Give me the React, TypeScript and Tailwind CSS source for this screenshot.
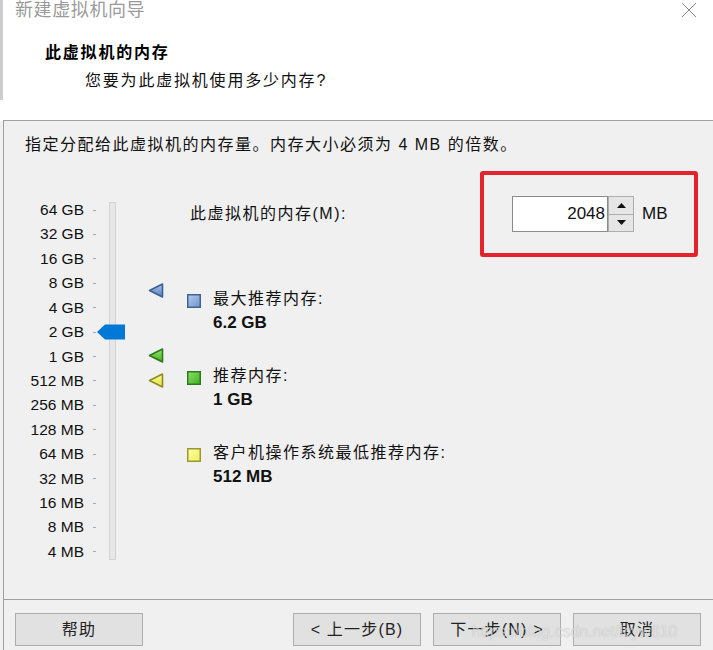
import React from "react";

const CJK = '"Liberation Sans", "Noto Sans CJK SC", sans-serif';
const LAT = '"Liberation Sans", sans-serif';

const labels = [
  "64 GB", "32 GB", "16 GB", "8 GB", "4 GB", "2 GB", "1 GB", "512 MB",
  "256 MB", "128 MB", "64 MB", "32 MB", "16 MB", "8 MB", "4 MB",
];

function Tri({ fill1, fill2, stroke }: { fill1: string; fill2: string; stroke: string }) {
  const id = "g" + fill1.replace("#", "");
  return (
    <svg width="16" height="15" viewBox="0 0 16 15">
      <defs>
        <linearGradient id={id} x1="0" y1="0" x2="0" y2="1">
          <stop offset="0" stopColor={fill1} />
          <stop offset="1" stopColor={fill2} />
        </linearGradient>
      </defs>
      <polygon points="1.5,7.5 14.5,1 14.5,14" fill={`url(#${id})`} stroke={stroke} strokeWidth="1.6" strokeLinejoin="round" />
    </svg>
  );
}

function Sq({ fill1, fill2, border }: { fill1: string; fill2: string; border: string }) {
  return (
    <svg width="14" height="14" viewBox="0 0 14 14" className="shrink-0">
      <defs>
        <linearGradient id={"s" + fill1.replace("#", "")} x1="0" y1="0" x2="1" y2="1">
          <stop offset="0" stopColor={fill1} />
          <stop offset="1" stopColor={fill2} />
        </linearGradient>
      </defs>
      <rect x="0.75" y="0.75" width="12.5" height="12.5" fill={`url(#s${fill1.replace("#", "")})`} stroke={border} strokeWidth="1.5" />
    </svg>
  );
}

function Btn({ children }: { children: React.ReactNode }) {
  return (
    <div
      className="w-[128px] h-[33px] flex items-center justify-center bg-[#e1e1e1] border border-[#adadad] text-[16px] tracking-[1.2px] text-[#222]"
      style={{ fontFamily: CJK }}
    >
      {children}
    </div>
  );
}

export default function App() {
  return (
    <div className="w-[713px] h-[650px] flex flex-row overflow-hidden bg-[#f0f0f0]" style={{ fontFamily: CJK }}>
      {/* left window edge */}
      <div className="w-[3px] flex flex-col shrink-0">
        <div className="h-[100px] bg-[#cdcdcd]" />
        <div className="h-[21px] bg-white" />
        <div className="flex-1 bg-[#f0f0f0]" />
      </div>

      <div className="flex-1 flex flex-col">
        {/* header */}
        <div className="h-[121px] bg-white border-b border-[#a0a0a0] flex flex-col relative">
          <div className="flex flex-row items-start justify-between">
            <div className="pl-[12px] pt-[0px] text-[18px] leading-[20px] tracking-[0.6px] text-[#9a9a9a]">新建虚拟机向导</div>
            <svg width="16" height="16" viewBox="0 0 16 16" className="mt-[2px] mr-[16px]">
              <path d="M1 1 L15 15 M15 1 L1 15" stroke="#8a8a8a" strokeWidth="1" />
            </svg>
          </div>
          <div className="pl-[42px] mt-[23px] text-[16px] leading-[20px] font-bold tracking-[1.8px] text-black">此虚拟机的内存</div>
          <div className="pl-[82px] mt-[8px] text-[16px] leading-[20px] tracking-[1.8px] text-[#111]">您要为此虚拟机使用多少内存?</div>
        </div>

        {/* body */}
        <div className="flex-1 flex flex-col border-l border-[#a0a0a0]">
          <div className="pl-[21px] pt-[12px] text-[16px] leading-[24px] tracking-[1.5px] text-[#111]">
            指定分配给此虚拟机的内存量。内存大小必须为 4 MB 的倍数。
          </div>

          <div className="mt-[14px] flex flex-row items-start h-[393px]">
            {/* slider */}
            <div className="relative w-[162px] h-[393px] flex flex-row items-start shrink-0">
              <div className="pt-[26.8px] flex flex-col">
                {labels.map((l) => (
                  <div key={l} className="h-[24.43px] flex flex-row items-center">
                    <div className="w-[80px] text-right text-[15.5px] leading-[18px] text-[#111]" style={{ fontFamily: LAT }}>
                      {l}
                    </div>
                    <div className="ml-[9px] w-[3px] h-px bg-[#a8a8a8]" />
                  </div>
                ))}
              </div>
              <div className="ml-[13px] mt-[31px] w-[7px] h-[358px] bg-[#e7e7e7] border border-[#d3d3d3]" />

              <svg width="28" height="16" viewBox="0 0 28 16" className="absolute left-[93px] top-[153px]">
                <polygon points="0,8 8,0.5 28,0.5 28,15.5 8,15.5" fill="#0078d7" />
              </svg>
              <div className="absolute left-[144px] top-[112px]">
                <Tri fill1="#a7c2e6" fill2="#5b83bf" stroke="#3b5f95" />
              </div>
              <div className="absolute left-[144px] top-[177px]">
                <Tri fill1="#9be56f" fill2="#3fae24" stroke="#2c7a18" />
              </div>
              <div className="absolute left-[144px] top-[202px]">
                <Tri fill1="#fafaa0" fill2="#e2e23a" stroke="#8c8c20" />
              </div>
            </div>

            {/* right side */}
            <div className="flex-1 flex flex-col">
              <div className="flex flex-row items-center">
                <div className="w-[314px] pl-[24px] text-[16px] leading-[20px] tracking-[1.5px] text-[#111]">
                  此虚拟机的内存(M):
                </div>
                <div className="w-[218px] h-[86px] border-[4px] border-[#e4242c] rounded-[3px] flex flex-row items-center pl-[28px]">
                  <div className="w-[96px] h-[36px] bg-white border border-[#8a8a8a] flex items-center justify-end pr-[2px]">
                    <span className="text-[17px] text-[#111]" style={{ fontFamily: LAT }}>2048</span>
                  </div>
                  <div className="w-[26px] h-[36px] flex flex-col border border-[#adadad] bg-[#e6e6e6]">
                    <div className="flex-1 flex items-center justify-center border-b border-[#adadad]">
                      <svg width="9" height="5" viewBox="0 0 9 5"><polygon points="0,5 4.5,0 9,5" fill="#111" /></svg>
                    </div>
                    <div className="flex-1 flex items-center justify-center">
                      <svg width="9" height="5" viewBox="0 0 9 5"><polygon points="0,0 4.5,5 9,0" fill="#111" /></svg>
                    </div>
                  </div>
                  <span className="ml-[8px] text-[17px] text-[#111]" style={{ fontFamily: LAT }}>MB</span>
                </div>
              </div>

              <div className="pl-[21px] mt-[30px] flex flex-col gap-[29px]">
                {[
                  { t: "最大推荐内存:", v: "6.2 GB", c: ["#b4cbec", "#6f95cc", "#44628f"] },
                  { t: "推荐内存:", v: "1 GB", c: ["#8ee26a", "#3eaf22", "#2b7a19"] },
                  { t: "客户机操作系统最低推荐内存:", v: "512 MB", c: ["#ffffb0", "#eeee55", "#9a9a2c"] },
                ].map((g) => (
                  <div key={g.t} className="flex flex-row items-start">
                    <div className="mt-[6.5px]">
                      <Sq fill1={g.c[0]} fill2={g.c[1]} border={g.c[2]} />
                    </div>
                    <div className="ml-[12px] flex flex-col">
                      <div className="h-[24px] leading-[24px] text-[16px] tracking-[1.5px] text-[#111]">{g.t}</div>
                      <div className="h-[24px] leading-[24px] text-[17px] font-bold text-[#111]" style={{ fontFamily: LAT }}>
                        {g.v}
                      </div>
                    </div>
                  </div>
                ))}
              </div>
            </div>
          </div>

          {/* footer */}
          <div className="mt-auto h-[51px] border-t border-[#a0a0a0] relative">
            <div className="pt-[13px] pl-[11px] flex flex-row">
              <Btn>帮助</Btn>
              <div className="ml-[150px] flex flex-row gap-[12px]">
                <Btn>&lt; 上一步(B)</Btn>
                <Btn>下一步(N) &gt;</Btn>
                <Btn>取消</Btn>
              </div>
            </div>
            <div
              className="absolute left-[468px] top-[20px] text-[16px] text-white/60 pointer-events-none"
              style={{ fontFamily: '"Liberation Sans Narrow", "Liberation Sans", sans-serif', textShadow: "0 0 1px rgba(0,0,0,0.25)" }}
            >
              https://blog.csdn.net/lcyw810
            </div>
          </div>
        </div>
      </div>
    </div>
  );
}
